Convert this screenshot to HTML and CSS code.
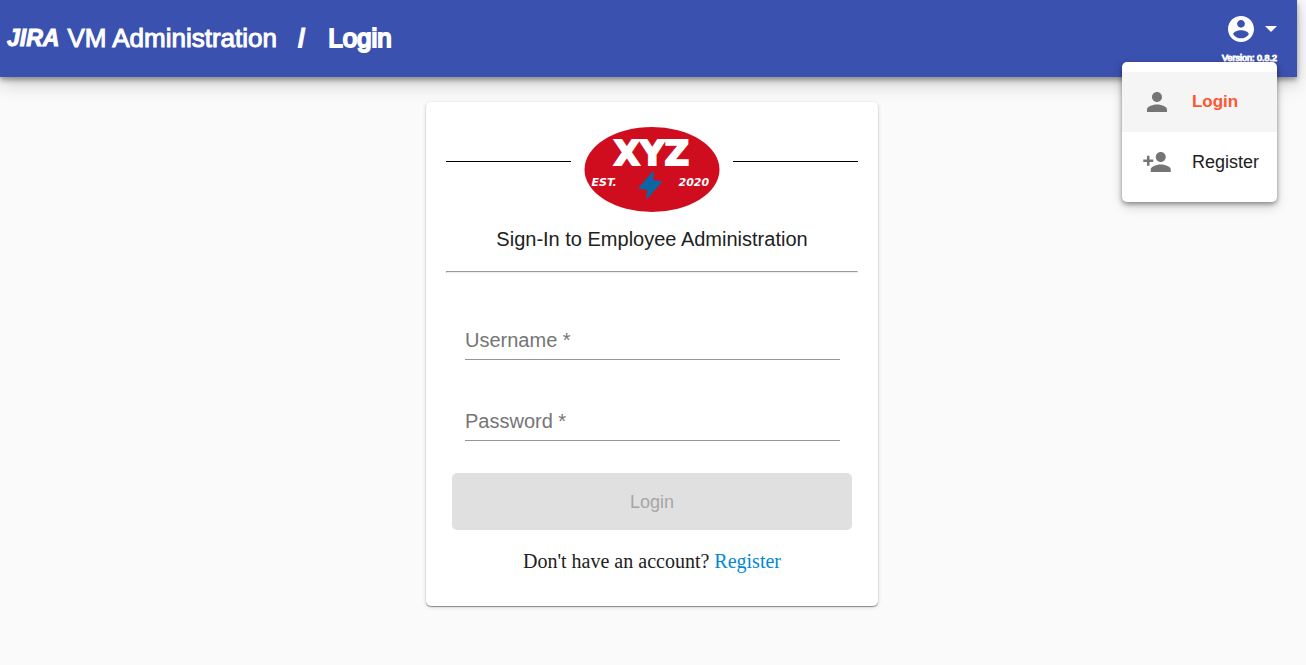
FILE: index.html
```html
<!DOCTYPE html>
<html lang="en">
<head>
<meta charset="utf-8">
<meta name="viewport" content="width=device-width, initial-scale=1">
<title>JIRA VM Administration / Login</title>
<link rel="stylesheet" href="styles.css">
</head>
<body>
<header class="toolbar">
  <h1 class="brand">
    <span class="brand-logo">JIRA</span>
    <span class="brand-name">VM Administration</span>
    <span class="brand-slash">/</span>
    <span class="brand-page">Login</span>
  </h1>
  <div class="account">
    <button class="account-button" type="button" aria-label="Account menu" aria-expanded="true">
      <svg class="account-icon" viewBox="2 2 20 20" aria-hidden="true"><path d="M12 2C6.48 2 2 6.48 2 12s4.48 10 10 10 10-4.48 10-10S17.52 2 12 2zm0 3c1.66 0 3 1.34 3 3s-1.34 3-3 3-3-1.340-3-3 1.34-3 3-3zm0 14.200c-2.500 0-4.710-1.280-6-3.220.03-1.990 4-3.080 6-3.080 1.990 0 5.970 1.090 6 3.080-1.290 1.940-3.500 3.220-6 3.220z"/></svg>
      <svg class="caret-icon" viewBox="0 0 12 6" aria-hidden="true"><path d="M0 0h12L6 6z"/></svg>
    </button>
    <span class="version">Version: 0.8.2</span>
    <nav class="menu" aria-label="Account">
      <a class="menu-item active" href="#login">
        <svg class="menu-icon" viewBox="0 0 24 24" aria-hidden="true"><path d="M12 12c2.210 0 4-1.790 4-4s-1.790-4-4-4-4 1.790-4 4 1.790 4 4 4zm0 2c-2.670 0-8 1.340-8 4v2h16v-2c0-2.660-5.330-4-8-4z"/></svg>
        <span>Login</span>
      </a>
      <a class="menu-item" href="#register">
        <svg class="menu-icon" viewBox="0 0 24 24" aria-hidden="true"><path d="M15 12c2.210 0 4-1.790 4-4s-1.790-4-4-4-4 1.790-4 4 1.790 4 4 4zm-9-2V7H4v3H1v2h3v3h2v-3h3v-2H6zm9 4c-2.670 0-8 1.340-8 4v2h16v-2c0-2.660-5.330-4-8-4z"/></svg>
        <span>Register</span>
      </a>
    </nav>
  </div>
</header>
<main class="page">
  <section class="card">
    <div class="logo-row">
      <span class="rule"></span>
      <svg class="logo" viewBox="0 0 135 85" role="img" aria-label="XYZ, est. 2020">
        <ellipse class="logo-oval" cx="67.500" cy="42.500" rx="67.500" ry="42.500"/>
        <text class="logo-name" x="67" y="38">XYZ</text>
        <path class="logo-bolt" d="M68 44.500L53.500 61.500l9.500 1.500-1.500 8 1.500.5L78 54.500l-9.500-1.500 1-8z"/>
        <text class="logo-small" x="7" y="59">EST.</text>
        <text class="logo-small" x="94" y="59">2020</text>
      </svg>
      <span class="rule"></span>
    </div>
    <h2 class="card-title">Sign-In to Employee Administration</h2>
    <hr class="divider">
    <form class="form">
      <div class="field">
        <label for="username">Username *</label>
        <input id="username" name="username" type="text" autocomplete="username" required>
      </div>
      <div class="field">
        <label for="password">Password *</label>
        <input id="password" name="password" type="password" autocomplete="current-password" required>
      </div>
      <button class="submit" type="submit" disabled>Login</button>
    </form>
    <p class="signup">Don't have an account? <a href="#register">Register</a></p>
  </section>
</main>
</body>
</html>
```
FILE: styles.css
```css
* {
  box-sizing: border-box;
}

body {
  margin: 0;
  min-height: 100vh;
  background: #fafafa;
  color: #212121;
  font-family: "Liberation Sans", Arial, sans-serif;
}

.toolbar {
  display: flex;
  justify-content: space-between;
  margin-right: 9px;
  padding: 16px 20px 13px 7px;
  background: #3b51b0;
  color: #fff;
  box-shadow: 0 3px 5px rgba(0, 0, 0, 0.35), 0 6px 18px rgba(0, 0, 0, 0.2);
}

.brand {
  display: flex;
  align-items: center;
  margin: 0;
  padding-bottom: 5px;
  font-size: 26px;
  line-height: 28px;
  font-weight: 400;
  white-space: nowrap;
  -webkit-text-stroke: 1px currentColor;
}

.brand-logo {
  margin-right: 8px;
  font-size: 23px;
  font-weight: 700;
  font-style: italic;
}

.brand-slash {
  margin: 0 20px 0 21px;
  font-weight: 700;
}

.brand-page {
  margin-left: 3px;
  -webkit-text-stroke-width: 2px;
}

.account {
  position: relative;
  display: flex;
  flex-direction: column;
  align-items: flex-end;
  gap: 11px;
}

.account-button {
  display: flex;
  align-items: center;
  gap: 11px;
  padding: 0;
  border: 0;
  background: none;
  color: inherit;
  cursor: pointer;
}

.account-icon {
  width: 26px;
  height: 26px;
  fill: currentColor;
}

.caret-icon {
  width: 12px;
  height: 6px;
  fill: currentColor;
}

.version {
  font-size: 9px;
  line-height: 11px;
  -webkit-text-stroke: 1px currentColor;
}

.menu {
  position: absolute;
  top: 46px;
  right: 0;
  z-index: 1;
  padding: 10px 0;
  border-radius: 5px;
  background: #fff;
  box-shadow: 0 2px 5px rgba(0, 0, 0, 0.4), 0 5px 12px rgba(0, 0, 0, 0.15);
}

.menu-item {
  display: flex;
  align-items: center;
  gap: 20px;
  height: 60px;
  padding: 0 18px 0 20px;
  color: #212121;
  font-size: 18px;
  text-decoration: none;
}

.menu-item.active {
  background: #f5f5f5;
  color: #ff5630;
  font-size: 17px;
  font-weight: 700;
}

.menu-icon {
  width: 30px;
  height: 30px;
  fill: #757575;
}

.page {
  display: flex;
  justify-content: center;
  padding: 25px 2px 20px 0;
}

.card {
  width: 100%;
  max-width: 452px;
  padding: 25px 20px 33px;
  border-radius: 5px;
  background: #fff;
  box-shadow: 0 1px 1px rgba(0, 0, 0, 0.4), 0 1px 4px rgba(0, 0, 0, 0.15);
}

.logo-row {
  display: flex;
  gap: 13px;
}

.rule {
  flex: 1;
  height: 1px;
  margin-top: 34px;
  background: #000;
}

.logo {
  width: 136px;
  height: 85px;
}

.logo-oval {
  fill: #d00d1e;
}

.logo-bolt {
  fill: #0b66a3;
}

.logo-name,
.logo-small {
  fill: #fff;
  stroke: #fff;
  font-family: "DejaVu Sans", sans-serif;
  font-weight: 700;
}

.logo-name {
  font-size: 34px;
  stroke-width: 2px;
  text-anchor: middle;
}

.logo-small {
  font-size: 11px;
  stroke-width: 0;
  font-style: italic;
}

.card-title {
  margin: 15px 0 20px;
  font-size: 20px;
  line-height: 24px;
  font-weight: 400;
  text-align: center;
}

.divider {
  margin: 0;
  border: 1px solid #999;
  border-right-color: #eee;
  border-bottom-color: #eee;
}

.form {
  display: flex;
  flex-direction: column;
  gap: 32px;
  padding: 38px 6px 0;
}

.field {
  display: grid;
  margin: 0 12px 0 13px;
  border-bottom: 1px solid #949494;
}

.field label,
.field input {
  grid-area: 1 / 1;
  width: 100%;
  padding: 17px 0 7px;
  font-size: 20px;
  line-height: 24px;
}

.field label {
  color: #757575;
  pointer-events: none;
}

.field input {
  border: 0;
  outline: 0;
  background: none;
  font-family: inherit;
}

.submit {
  height: 57px;
  padding: 2px 0 0;
  border: 0;
  border-radius: 5px;
  background: #e0e0e0;
  color: #a6a6a6;
  font-family: inherit;
  font-size: 18px;
}

.signup {
  margin: 19px 0 0;
  font-family: "Liberation Serif", "Times New Roman", serif;
  font-size: 20px;
  line-height: 24px;
  text-align: center;
}

.signup a {
  color: #0288d8;
  text-decoration: none;
}
```
